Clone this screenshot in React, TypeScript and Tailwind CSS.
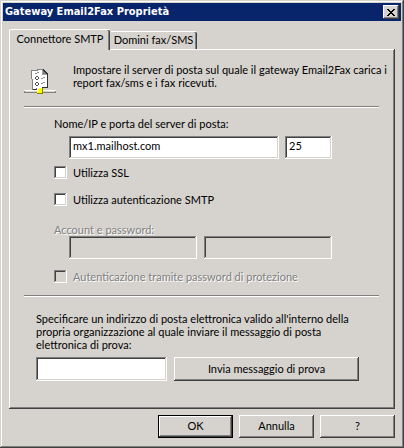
import React from 'react'
import clsx from 'clsx'

const raised = 'bg-[#d6d3ce] shadow-[inset_-1px_-1px_0_#404040,inset_1px_1px_0_#fff,inset_-2px_-2px_0_#808080]'
const sunken =
  'shadow-[inset_-1px_-1px_0_#fff,inset_1px_1px_0_#808080,inset_-2px_-2px_0_#d6d3ce,inset_2px_2px_0_#404040]'
const disabledText = 'text-[#808080] [text-shadow:1px_1px_0_#fff]'

const TextBox: React.FC<React.ComponentProps<'input'>> = ({ className, ...props }) => (
  <input
    className={clsx('block min-w-0 rounded-none px-1 pb-1 outline-none disabled:bg-[#d6d3ce]', !props.disabled && 'bg-white', sunken, className)}
    {...props}
  />
)

const Button: React.FC<React.ComponentProps<'button'>> = ({ className, ...props }) => (
  <button type="button" className={clsx('pb-0.5 text-center', raised, className)} {...props} />
)

const CheckBox: React.FC<{ label: string; disabled?: boolean }> = ({ label, disabled }) => (
  <label className="flex items-center gap-1.5">
    <input
      type="checkbox"
      disabled={disabled}
      className={clsx('size-[13px] shrink-0 appearance-none', disabled ? 'bg-[#d6d3ce]' : 'bg-white', sunken)}
    />
    <span className={clsx(disabled && disabledText)}>{label}</span>
  </label>
)

const Divider = () => <hr className="h-0.5 border-t border-b border-t-[#808080] border-b-white" />

/** Shared document on a network cable */
const ServerIcon = () => (
  <svg className="size-8 shrink-0" viewBox="0 0 32 32" shapeRendering="crispEdges" aria-hidden="true">
    <path d="M0 23h32v3H0z" fill="#808080" />
    <path d="M0 23h32v1H0z" fill="#fff" />
    <path d="M1 24h30v1H1z" fill="#d6d3ce" />
    <path d="M7 3h6V2h6v1h2v1h1v1h1v1h1v15h-5v1h-6v1H8V12H7z" fill="#848284" />
    <path d="M8 4h6V3h5v4h4v13h-5v1h-6v1H9V12H8z" fill="#fff" />
    <path d="M18 3h1v4h5v1h-6z" fill="#a0a0a0" />
    <path d="M19 2h1v1h1v1h1v1h1v1h1v2h-1V7h-1V6h-1V5h-1V4h-1z" fill="#303030" />
    <path d="M23 8h1v13h-5v1h-6v1H9v-1h4v-1h5v-1h5z" fill="#303030" />
    <path d="M12 9h2v1h1v2h-1v1h-2v-1h-1v-2h1z" fill="#505050" />
    <path d="M12 10h2v2h-2z" fill="#fff" />
    <path d="M12 15h2v1h1v2h-1v1h-2v-1h-1v-2h1z" fill="#505050" />
    <path d="M12 16h2v2h-2z" fill="#fff" />
    <path d="M17 11h2v-1h2v1h-2v1h-2zM17 16h2v-1h2v1h-2v1h-2zM11 6h2V5h2v1h-2v1h-2z" fill="#909090" />
    <path d="M13 21h6v6h-6z" fill="#848200" />
    <path d="M13 21h5v5h-5z" fill="#ffff00" />
    <path d="M13 21h2v1h-1v2h-1z" fill="#fff" />
  </svg>
)

const TitleBar = () => (
  <header className="flex h-[18px] items-center justify-between bg-[#08246b] px-0.5 text-white">
    <h1 className="font-['DejaVu_Sans_Condensed','Noto_Sans',sans-serif] text-[11px] leading-[18px] font-bold whitespace-nowrap">
      Gateway Email2Fax Proprietà
    </h1>
    <button type="button" aria-label="Chiudi" className={clsx('flex h-3.5 w-4 items-center justify-center', raised)}>
      <svg className="h-[7px] w-2" viewBox="0 0 8 7" shapeRendering="crispEdges">
        <path
          d="M0 0h2v1h1v1h2V1h1V0h2v1H7v1H6v1H5v1h1v1h1v1h1v1H6V6H5V5H3v1H2v1H0V6h1V5h1V4h1V3H2V2H1V1H0z"
          fill="#000"
        />
      </svg>
    </button>
  </header>
)

const Tabs = () => (
  <div role="tablist" className="flex items-end">
    <button
      type="button"
      role="tab"
      aria-selected="true"
      className="relative z-10 -mb-px h-[21px] w-[101px] rounded-t-[2px] border-t border-l border-white bg-[#d6d3ce] pb-1 text-center whitespace-nowrap shadow-[inset_-1px_0_0_#404040,inset_-2px_0_0_#808080]"
    >
      Connettore SMTP
    </button>
    <button
      type="button"
      role="tab"
      aria-selected="false"
      className="h-[18px] w-[87px] rounded-t-[2px] border-t border-white bg-[#d6d3ce] pb-0.5 text-center whitespace-nowrap shadow-[inset_-1px_0_0_#404040,inset_-2px_0_0_#808080]"
    >
      Domini fax/SMS
    </button>
  </div>
)

const App: React.FC = () => {
  return (
    <main className="w-full bg-[#d6d3ce] p-[3px] pb-[10px] font-[Lato,Arial,sans-serif] text-[11px] leading-[13px] text-black shadow-[inset_-1px_-1px_0_#404040,inset_1px_1px_0_#d6d3ce,inset_-2px_-2px_0_#808080,inset_2px_2px_0_#fff]">
      <TitleBar />

      <div className="px-1.5 pt-2">
        <Tabs />
        <section role="tabpanel" className={clsx('pt-3.5 pr-4 pb-7 pl-[15px]', raised)}>
          <div className="flex gap-[17px]">
            <div className="pt-1">
              <ServerIcon />
            </div>
            <p className="whitespace-nowrap">
              Impostare il server di posta sul quale il gateway Email2Fax carica i
              <br />
              report fax/sms e i fax ricevuti.
            </p>
          </div>

          <div className="pt-[7px]">
            <Divider />
          </div>

          <form className="pt-[9px] pb-3 pl-[30px]">
            <label htmlFor="host" className="block">
              Nome/IP e porta del server di posta:
            </label>
            <div className="flex gap-1.5 pt-1.5 pr-[47px] pl-[15px]">
              <TextBox id="host" className="h-[23px] flex-1" defaultValue="mx1.mailhost.com" />
              <TextBox aria-label="Porta" className="h-[23px] w-[47px]" defaultValue="25" />
            </div>

            <div className="flex flex-col gap-3.5 pt-[7px]">
              <CheckBox label="Utilizza SSL" />
              <CheckBox label="Utilizza autenticazione SMTP" />
            </div>

            <label htmlFor="account" className={clsx('block pt-[17px]', disabledText)}>
              Account e password:
            </label>
            <div className="flex gap-[7px] pr-[47px] pb-[11px] pl-[15px]">
              <TextBox id="account" disabled className="h-[23px] flex-1" />
              <TextBox aria-label="Password" type="password" disabled className="h-[23px] flex-1" />
            </div>
            <CheckBox label="Autenticazione tramite password di protezione" disabled />
          </form>

          <Divider />

          <div className="pt-[15px] pl-3">
            <label htmlFor="test-address" className="block whitespace-nowrap">
              Specificare un indirizzo di posta elettronica valido all'interno della
              <br />
              propria organizzazione al quale inviare il messaggio di posta
              <br />
              elettronica di prova:
            </label>
            <div className="flex gap-[7px] pt-1.5 pr-5">
              <TextBox id="test-address" className="h-6 w-[131px]" />
              <Button className="h-6 flex-1">Invia messaggio di prova</Button>
            </div>
          </div>
        </section>

        <footer className="flex justify-end gap-1.5 pt-1.5">
          <button
            type="button"
            className="h-[23px] w-[75px] border border-black bg-[#d6d3ce] pb-0.5 text-center shadow-[inset_-1px_-1px_0_#404040,inset_1px_1px_0_#fff,inset_-2px_-2px_0_#808080]"
          >
            OK
          </button>
          <Button className="h-[23px] w-[75px]">Annulla</Button>
          <Button className="h-[23px] w-[75px]">?</Button>
        </footer>
      </div>
    </main>
  )
}

export default App
